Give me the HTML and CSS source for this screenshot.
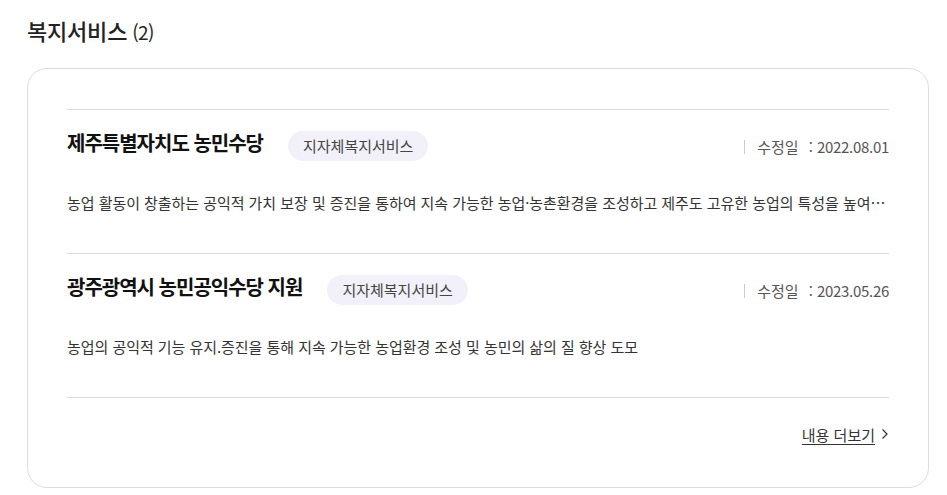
FILE: index.html
```html
<!DOCTYPE html>
<html lang="ko">
<head>
  <meta charset="utf-8" />
  <title>복지서비스</title>
  <link rel="stylesheet" href="styles.css">
</head>
<body>
  <div class="section">
    <h2 class="section-title">복지서비스<span class="count">(2)</span></h2>

    <div class="card">
      <ul class="service-list">
        <li class="service-item">
          <div class="item-head">
            <strong class="item-title">제주특별자치도 농민수당</strong>
            <span class="badge">지자체복지서비스</span>
            <span class="item-date">수정일 <em>:</em><b>2022.08.01</b></span>
          </div>
          <p class="item-desc">농업 활동이 창출하는 공익적 가치 보장 및 증진을 통하여 지속 가능한 농업·농촌환경을 조성하고 제주도 고유한 농업의 특성을 높여 나가기 위함</p>
        </li>
        <li class="service-item">
          <div class="item-head">
            <strong class="item-title">광주광역시 농민공익수당 지원</strong>
            <span class="badge">지자체복지서비스</span>
            <span class="item-date">수정일 <em>:</em><b>2023.05.26</b></span>
          </div>
          <p class="item-desc">농업의 공익적 기능 유지.증진을 통해 지속 가능한 농업환경 조성 및 농민의 삶의 질 향상 도모</p>
        </li>
      </ul>

      <div class="more-row">
        <a href="#" class="more-link">내용 더보기</a>
        <svg class="more-arrow" width="8" height="12" viewBox="0 0 8 12"><path d="M1.5 1.5 L6 6 L1.5 10.5" fill="none" stroke="#333" stroke-width="1.2"/></svg>
      </div>
    </div>
  </div>
</body>
</html>
```

FILE: styles.css
```css
body {
  margin: 0;
  padding: 0;
  background: #fff;
  font-family: "Noto Sans CJK KR", "Noto Sans", sans-serif;
  color: #222;
}

.section {
  padding: 14px 18px 0 27px;
}

.section-title {
  margin: 0;
  font-size: 22px;
  font-weight: 500;
  line-height: 32px;
  letter-spacing: -0.2px;
  color: #222;
}

.section-title .count {
  font-size: 19px;
  font-weight: 400;
  margin-left: 5px;
  letter-spacing: -0.6px;
}

.card {
  margin-top: 20px;
  border: 1px solid #ddd;
  border-radius: 20px;
  padding: 40px 39px 42px 39px;
}

.service-list {
  list-style: none;
  margin: 0;
  padding: 0;
  border-bottom: 1px solid #ddd;
}

.service-item {
  border-top: 1px solid #ddd;
  padding: 21px 0 39px;
}

.item-head {
  display: flex;
  align-items: center;
  height: 30px;
}

.item-title {
  font-size: 20px;
  font-weight: 700;
  letter-spacing: -1px;
  color: #111;
  margin-top: -8px;
}

.badge {
  margin-left: 25px;
  height: 30px;
  line-height: 30px;
  padding: 0 15px;
  border-radius: 15px;
  background: #f2f1f9;
  font-size: 15px;
  color: #444;
}

.item-date {
  margin-left: auto;
  padding-left: 12px;
  border-left: 1px solid #ccc;
  font-size: 15px;
  line-height: 14px;
  color: #555;
  margin-top: 2px;
}

.item-date em {
  font-style: normal;
  margin: 0 4px 0 6px;
}

.item-date b {
  font-weight: 400;
  letter-spacing: -0.3px;
}

.item-desc {
  margin: 31px 0 0;
  font-size: 15px;
  line-height: 22px;
  letter-spacing: -0.05px;
  color: #333;
  white-space: nowrap;
  overflow: hidden;
  text-overflow: ellipsis;
}

.more-row {
  display: flex;
  justify-content: flex-end;
  align-items: center;
  margin-top: 25px;
  height: 22px;
}

.more-link {
  font-size: 15px;
  color: #333;
  text-decoration: underline;
  text-underline-offset: 3px;
}

.more-arrow {
  margin-left: 6px;
}
```
